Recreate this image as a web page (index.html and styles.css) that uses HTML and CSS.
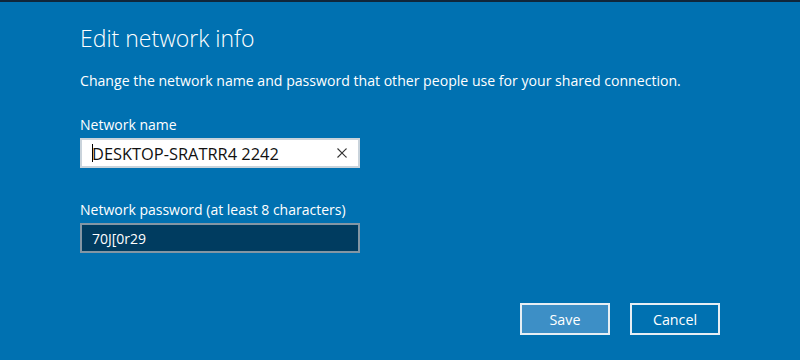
FILE: index.html
```html
<!DOCTYPE html>
<html lang="en">

<head>
    <meta charset="utf-8">
    <title>Edit network info</title>
    <link rel="stylesheet" href="styles.css">
</head>

<body>
    <div class="dialog">
        <h1>Edit network info</h1>
        <p class="intro">Change the network name and password that other people use for your shared connection.</p>

        <div class="felt">
            <label for="navn">Network name</label>
            <div class="boks lys">
                <span class="cursor"></span>
                <input id="navn" type="text" value="DESKTOP-SRATRR4 2242">
                <svg class="ryd" width="10" height="10" viewBox="0 0 10 10">
                    <path d="M0.5 0.5 L9.5 9.5 M9.5 0.5 L0.5 9.5" stroke="#333" stroke-width="1.1" fill="none"/>
                </svg>
            </div>
        </div>

        <div class="felt">
            <label for="kode">Network password (at least 8 characters)</label>
            <div class="boks moerk">
                <input id="kode" type="text" value="70J[0r29">
            </div>
        </div>

        <div class="knapper">
            <button class="gem">Save</button>
            <button>Cancel</button>
        </div>
    </div>
</body>

</html>
```

FILE: styles.css
```css
* {
    box-sizing: border-box;
}

html,
body {
    height: 100%;
}

body {
    margin: 0;
    background-color: #0071b1;
    border-top: 2px solid #10263a;
    font-family: 'Open Sans', 'Noto Sans', sans-serif;
    color: #fff;
}

.dialog {
    padding: 21px 0 0 80px;
    width: 720px;
}

h1 {
    font-size: 23px;
    font-weight: 300;
    margin: 0;
    line-height: 30px;
}

.intro {
    font-size: 14.1px;
    margin: 18px 0 0;
    line-height: 20px;
}

.felt {
    margin-top: 24px;
}

.felt + .felt {
    margin-top: 32px;
}

label {
    display: block;
    font-size: 14px;
    line-height: 20px;
    margin-bottom: 3px;
}

.boks {
    display: flex;
    align-items: center;
    width: 280px;
    height: 30px;
    border: 2px solid #c9d3db;
    padding: 0 8px 0 10px;
}

.boks input {
    flex: 1;
    min-width: 0;
    border: none;
    background: transparent;
    font-family: inherit;
    font-size: 14px;
    padding: 0;
    outline: none;
}

.lys {
    background-color: #fff;
}

.boks.lys input {
    color: #111;
    font-size: 16.4px;
}

.cursor {
    width: 1px;
    height: 18px;
    background-color: #000;
    margin-right: -1px;
}

.ryd {
    margin-right: 3px;
}

.moerk {
    background-color: #003c60;
    border-color: #8396a4;
}

.moerk input {
    color: #fff;
}

.knapper {
    display: flex;
    justify-content: flex-end;
    gap: 20px;
    margin-top: 50px;
}

.knapper button {
    width: 90px;
    height: 32px;
    border: 2px solid #e6eef4;
    background-color: transparent;
    color: #fff;
    font-family: inherit;
    font-size: 14.3px;
}

.knapper .gem {
    background-color: #3d8fc6;
}
```
